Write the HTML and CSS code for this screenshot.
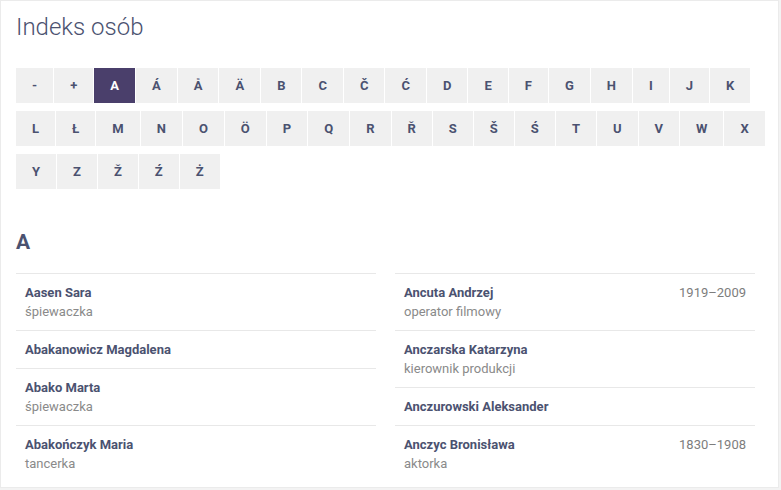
FILE: index.html
```html
<!DOCTYPE html>
<html lang="pl">
<head>
<meta charset="utf-8">
<title>Indeks osób</title>
<link rel="stylesheet" href="styles.css">
</head>
<body>
<div class="card">
  <h1 class="title">Indeks osób</h1>
  <nav class="letters">
    <div class="letter-row">
      <a class="letter">-</a><a class="letter">+</a><a class="letter active">A</a><a class="letter">Á</a><a class="letter">Å</a><a class="letter">Ä</a><a class="letter">B</a><a class="letter">C</a><a class="letter">Č</a><a class="letter">Ć</a><a class="letter">D</a><a class="letter">E</a><a class="letter">F</a><a class="letter">G</a><a class="letter">H</a><a class="letter">I</a><a class="letter">J</a><a class="letter">K</a>
    </div>
    <div class="letter-row">
      <a class="letter">L</a><a class="letter">Ł</a><a class="letter">M</a><a class="letter">N</a><a class="letter">O</a><a class="letter">Ö</a><a class="letter">P</a><a class="letter">Q</a><a class="letter">R</a><a class="letter">Ř</a><a class="letter">S</a><a class="letter">Š</a><a class="letter">Ś</a><a class="letter">T</a><a class="letter">U</a><a class="letter">V</a><a class="letter">W</a><a class="letter">X</a>
    </div>
    <div class="letter-row">
      <a class="letter">Y</a><a class="letter">Z</a><a class="letter">Ž</a><a class="letter">Ź</a><a class="letter">Ż</a>
    </div>
  </nav>
  <h2 class="section">A</h2>
  <div class="columns">
    <ul class="people">
      <li class="person"><div class="info"><div class="name">Aasen Sara</div><div class="role">śpiewaczka</div></div></li>
      <li class="person"><div class="info"><div class="name">Abakanowicz Magdalena</div></div></li>
      <li class="person"><div class="info"><div class="name">Abako Marta</div><div class="role">śpiewaczka</div></div></li>
      <li class="person"><div class="info"><div class="name">Abakończyk Maria</div><div class="role">tancerka</div></div></li>
    </ul>
    <ul class="people">
      <li class="person"><div class="info"><div class="name">Ancuta Andrzej</div><div class="role">operator filmowy</div></div><div class="dates">1919–2009</div></li>
      <li class="person"><div class="info"><div class="name">Anczarska Katarzyna</div><div class="role">kierownik produkcji</div></div></li>
      <li class="person"><div class="info"><div class="name">Anczurowski Aleksander</div></div></li>
      <li class="person"><div class="info"><div class="name">Anczyc Bronisława</div><div class="role">aktorka</div></div><div class="dates">1830–1908</div></li>
    </ul>
  </div>
</div>
</body>
</html>
```

FILE: styles.css
```css
* { box-sizing: border-box; }
html, body { margin: 0; padding: 0; }
body {
  background: #f3f3f3;
  font-family: Roboto, "Liberation Sans", sans-serif;
  color: #4b5270;
}
.card {
  width: 779px;
  height: 488px;
  background: #fff;
  border: 1px solid #ebebeb;
  padding: 0 10px 0 15px;
  overflow: hidden;
}
.title {
  margin: 10px 0 0;
  font-size: 24px;
  font-weight: 300;
  line-height: 32px;
  color: #4b5270;
}
.letters {
  display: flex;
  flex-direction: column;
  gap: 8px;
  margin-top: 25px;
}
.letter-row {
  display: flex;
  gap: 1px;
}
.letter {
  display: flex;
  align-items: center;
  justify-content: center;
  height: 35px;
  padding: 0 16px;
  background: #f0f0f0;
  font-size: 13px;
  font-weight: 700;
  color: #4b5270;
}
.letter.active { background: #4a3f6b; color: #fff; }
.section {
  margin: 41px 0 0;
  font-size: 21px;
  font-weight: 700;
  line-height: 24px;
  color: #4b5270;
}
.columns {
  display: grid;
  grid-template-columns: 360px 360px;
  column-gap: 19px;
  margin-top: 19px;
}
.people { list-style: none; margin: 0; padding: 0; }
.person {
  display: flex;
  justify-content: space-between;
  border-top: 1px solid #e8e8e8;
  padding: 9px 9px;
  font-size: 13px;
  line-height: 19px;
}
.name { font-weight: 700; color: #4b5270; }
.role { color: #8a8a8a; }
.dates { color: #7d7d7d; }
```
